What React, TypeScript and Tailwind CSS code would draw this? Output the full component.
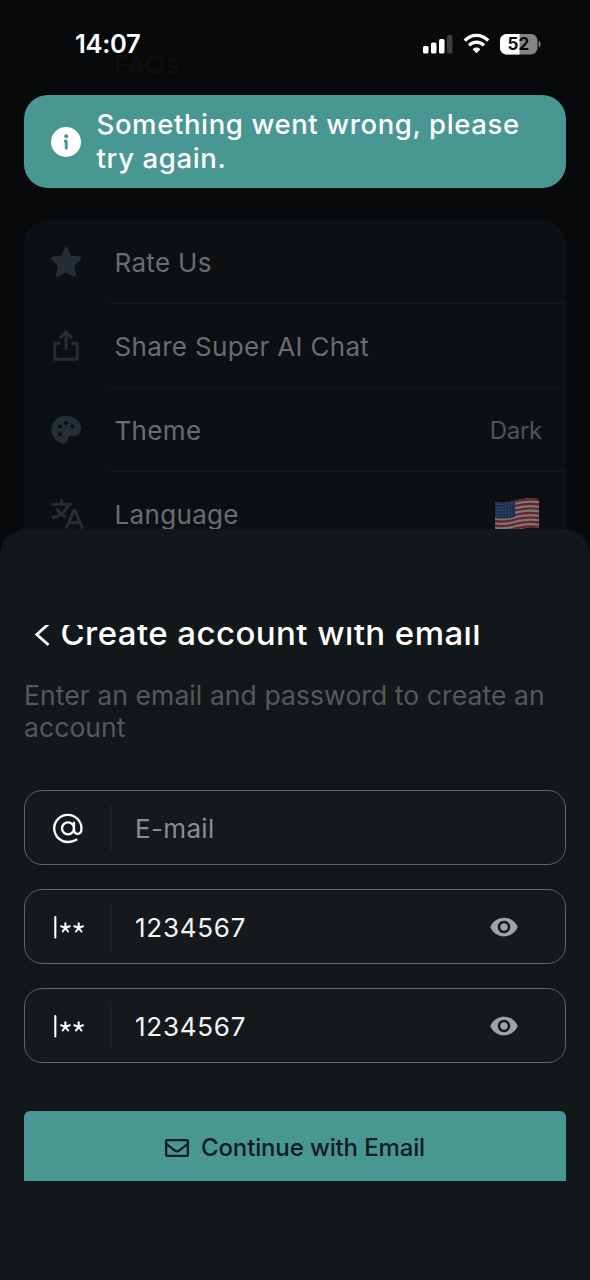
import React from 'react';
import { FaRegEnvelope } from 'react-icons/fa';
import { MdVisibility } from 'react-icons/md';

const StarIcon: React.FC = () => (
  <svg className="h-8 w-8" viewBox="0 0 32 32" fill="currentColor" stroke="currentColor" strokeWidth="3.6" strokeLinejoin="round">
    <path d="M16 2.8 19.4 11.4 29.3 12.3 22 19.4 24.4 29 16 24.4 7.6 29 10 19.4 2.7 12.3 12.6 11.4Z" />
  </svg>
);

const ShareIcon: React.FC = () => (
  <svg className="h-8 w-8" viewBox="0 0 32 32" fill="none" stroke="currentColor" strokeWidth="3">
    <path d="M10.5 13.2H4.8V29.3H27.2V13.2H21.5" strokeLinejoin="round" />
    <path d="M16 20V3M9.8 8.2 16 2.2 22.2 8.2" />
  </svg>
);

const PaletteIcon: React.FC = () => (
  <svg className="h-8 w-8" viewBox="0 0 32 32">
    <path
      d="M16 1.7C24.5 1.7 31 7.4 31 14.6C31 19 28.4 21.8 24.5 21.8H21C19 21.8 18.4 23 18 25C17.3 28.2 15.7 30 13.2 30C6.6 28.3 1.3 22.8 1.3 15.6C1.3 7.8 7.9 1.7 16 1.7Z"
      fill="currentColor"
    />
    <g fill="#0c1013">
      <circle cx="10" cy="12.4" r="2" />
      <circle cx="16" cy="9" r="2" />
      <circle cx="22.3" cy="12.4" r="2" />
      <circle cx="10" cy="20.3" r="2" />
    </g>
  </svg>
);

const TranslateIcon: React.FC = () => (
  <svg className="h-9 w-9" viewBox="0 0 36 36" fill="none" stroke="currentColor" strokeWidth="3">
    <path d="M3.3 8.2H24M13.6 3.3V8.2M20.3 8.2C18.3 14.6 13.4 20.2 4 21.8M8.6 12.2C10.2 15.6 13.5 19 17.5 20.8" />
    <path d="M18.2 32.6 25.8 14.8H27L34.6 32.6M21 26.6H31.8" />
  </svg>
);

const InfoIcon: React.FC = () => (
  <svg className="h-[30px] w-[30px]" viewBox="0 0 30 30">
    <circle cx="15" cy="15" r="15" fill="#fff" />
    <circle cx="15.2" cy="9.2" r="2" fill="#489793" />
    <path d="M14.2 14H15.2V21" fill="none" stroke="#489793" strokeWidth="3" strokeLinecap="round" strokeLinejoin="round" />
  </svg>
);

const AtIcon: React.FC = () => (
  <svg className="h-8 w-8" viewBox="0 0 32 32" fill="none" stroke="#fff" strokeWidth="2.3" strokeLinecap="round">
    <circle cx="16" cy="16.4" r="6" />
    <path d="M22 10.6V17.8C22 23.2 29.4 23.2 29.4 17.2V16.4A13.6 13.6 0 1 0 16 30C19.5 30 22 29.3 24.4 27.8" />
  </svg>
);

const PasswordIcon: React.FC = () => (
  <svg className="h-8 w-8" viewBox="0 0 32 32" fill="none" stroke="#fff" strokeWidth="2.1" strokeLinecap="round">
    <path d="M3.3 6V26.5" />
    <path d="M13.4 16.8V12.3M13.4 16.8 17.7 15.3M13.4 16.8 16.1 20.5M13.4 16.8 10.7 20.5M13.4 16.8 9.1 15.3" />
    <path d="M26.7 16.8V12.3M26.7 16.8 31 15.3M26.7 16.8 29.4 20.5M26.7 16.8 24 20.5M26.7 16.8 22.4 15.3" />
  </svg>
);

const UsFlag: React.FC = () => (
  <svg className="mr-[2px] h-[34px] w-[46px]" viewBox="0 0 46 34">
    <defs>
      <clipPath id="flag">
        <path d="M1 4C12 6 17 3.5 23 2C31 0 39 0 45 1V30C35 28 29 31 22 32.5C15 34 7 33 1 32Z" />
      </clipPath>
    </defs>
    <g clipPath="url(#flag)">
      <rect width="46" height="34" fill="#77787a" />
      {[0, 1, 2, 3, 4, 5, 6].map((i) => (
        <path
          key={i}
          transform={`translate(0 ${i * 4.5})`}
          d="M1 5C12 7 17 4.5 23 3C31 1 39 1 45 2"
          fill="none"
          stroke="#6c2028"
          strokeWidth="2.3"
        />
      ))}
      <path d="M1 4C9 5.4 15 4.3 21 2.5V19C15 20.5 9 21 1 20Z" fill="#1d3155" />
      {[0, 1, 2, 3, 4].map((i) => (
        <path
          key={i}
          transform={`translate(0 ${i * 3})`}
          d="M2.5 6.2C9 7 15 6 20 4.6"
          fill="none"
          stroke="#586580"
          strokeWidth="0.9"
          strokeDasharray="0.9 2"
        />
      ))}
    </g>
  </svg>
);

const StatusBar: React.FC = () => (
  <div className="flex h-[88px] items-center justify-between pr-[49px] pl-[75px] text-white">
    <span className="text-[25.5px] font-semibold tracking-[-0.3px]">14:07</span>
    <svg className="h-6 w-[118px]" viewBox="0 0 118 24">
      <rect x="0" y="14" width="5.5" height="7.5" rx="1.6" fill="#fff" />
      <rect x="8" y="10.5" width="5.5" height="11" rx="1.6" fill="#fff" />
      <rect x="16" y="7" width="5.5" height="14.5" rx="1.6" fill="#fff" />
      <rect x="24" y="3" width="5.5" height="18.5" rx="1.6" fill="#3c3d3f" />
      <g fill="none" stroke="#fff" strokeWidth="3.3">
        <path d="M41.8 8.7C48.4 1.5 58.6 1.5 65.2 8.7" />
        <path d="M46 13.4C50.3 9 56.7 9 61 13.4" />
      </g>
      <path d="M49.6 17.2C51.8 15 55.2 15 57.4 17.2L53.5 21.2Z" fill="#fff" />
      <clipPath id="battery">
        <rect x="77" y="2" width="37.5" height="20.5" rx="6.5" />
      </clipPath>
      <g clipPath="url(#battery)">
        <rect x="77" y="2" width="38" height="21" fill="#858587" />
        <rect x="77" y="2" width="19.5" height="21" fill="#fff" />
      </g>
      <path d="M115.7 9C118.2 10 118.2 14.5 115.7 15.5Z" fill="#858587" />
      <text x="95.4" y="18.4" textAnchor="middle" fontSize="17" fontWeight="700" fill="#08090b">52</text>
    </svg>
  </div>
);

const Toast: React.FC = () => (
  <div className="mx-6 mt-[7px] flex h-[93px] items-center rounded-[24px] bg-[#489793] pl-[27px]">
    <InfoIcon />
    <p className="ml-[15.5px] pb-[2px] text-[27.5px] leading-[34px] font-medium tracking-[0.62px] whitespace-nowrap text-white">
      Something went wrong, please
      <br />
      try again.
    </p>
  </div>
);

interface SettingsRowProps {
  icon: React.ReactNode;
  label: string;
  value?: React.ReactNode;
}

const SettingsRow: React.FC<SettingsRowProps> = ({ icon, label, value }) => (
  <div className="flex h-[84px] shrink-0">
    <div className="flex w-[84px] items-center justify-center text-[#252e34]">{icon}</div>
    <div className="flex flex-1 items-center justify-between border-b border-[#14181b] pt-[2px] pr-6 pl-[6.5px] text-[26px] tracking-[0.33px] text-[#6b6c70]">
      <span>{label}</span>
      {value}
    </div>
  </div>
);

interface FieldProps {
  icon: React.ReactNode;
  text: string;
  placeholder?: boolean;
}

const Field: React.FC<FieldProps> = ({ icon, text, placeholder }) => (
  <div className="flex h-[75px] items-center rounded-[18px] border border-[#606365] bg-[#15191c]">
    <div className="flex w-[85px] justify-center">{icon}</div>
    <div className="h-12 w-px bg-[#23272a]" />
    <span
      className={`flex-1 pt-[2px] pl-6 text-[26px] ${
        placeholder ? 'tracking-[0.35px] text-[#8b8d8f]' : 'tracking-[0.75px] text-[#f4f5f6]'
      }`}
    >
      {text}
    </span>
    {!placeholder && <MdVisibility className="mr-[46px] text-[#a0a2a5]" size={30} />}
  </div>
);

const SignUpSheet: React.FC = () => (
  <div className="absolute inset-x-0 bottom-0 h-[751px] rounded-t-[26px] bg-[#12171a] px-6 pt-24">
    {/* scrolled content, cut off at the top edge */}
    <div className="h-[556px] overflow-hidden">
      <div className="-mt-[11px] flex h-10 items-center pl-[10px]">
        <svg className="h-[26px] w-4" viewBox="0 0 16 26" fill="none" stroke="#fff" strokeWidth="2.8">
          <path d="M14.5 3 2.8 13.5 14.5 24" />
        </svg>
        <h1 className="ml-[10.5px] text-[33px] font-medium tracking-[0.42px] whitespace-nowrap text-white">
          Create account with email
        </h1>
      </div>
      <p className="mt-[25px] text-[26.5px] leading-8 tracking-[0.08px] whitespace-nowrap text-[#56595b]">
        Enter an email and password to create an
        <br />
        account
      </p>
      <div className="mt-[47px] flex flex-col gap-6">
        <Field icon={<AtIcon />} text="E-mail" placeholder />
        <Field icon={<PasswordIcon />} text="1234567" />
        <Field icon={<PasswordIcon />} text="1234567" />
      </div>
      <button className="mt-12 flex h-[74px] w-full items-center justify-center gap-3 rounded-[6px] bg-[#489793] text-[24px] font-medium tracking-[-0.14px] text-[#0e1a24]">
        <FaRegEnvelope size={24} />
        <span>Continue with Email</span>
      </button>
    </div>
  </div>
);

const App: React.FC = () => {
  return (
    <div className="relative h-[1280px] w-[590px] overflow-hidden bg-[#08090b] font-['Inter',sans-serif]">
      <span className="absolute top-[45px] left-[114px] text-[26px] tracking-[0.5px] text-[#0e0f11]">FAQs</span>
      <div className="relative">
        <StatusBar />
        <Toast />
      </div>
      <div className="mx-6 mt-8 flex h-[340px] flex-col overflow-hidden rounded-t-[24px] bg-[#0c1013]">
        <SettingsRow icon={<StarIcon />} label="Rate Us" />
        <SettingsRow icon={<ShareIcon />} label="Share Super AI Chat" />
        <SettingsRow
          icon={<PaletteIcon />}
          label="Theme"
          value={<span className="text-[24px] tracking-[-0.3px] text-[#515356]">Dark</span>}
        />
        <SettingsRow icon={<TranslateIcon />} label="Language" value={<UsFlag />} />
      </div>
      <SignUpSheet />
    </div>
  );
};

export default App;
